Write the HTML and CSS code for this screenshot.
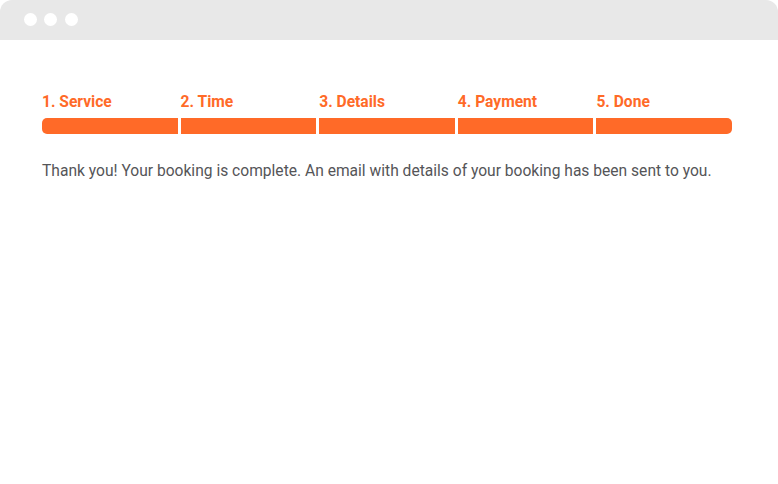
FILE: index.html
```html
<!DOCTYPE html>
<html>
<head>
<meta charset="utf-8">
<link rel="stylesheet" href="styles.css">
</head>
<body>
<div class="window">
  <div class="titlebar">
    <span class="dot"></span><span class="dot"></span><span class="dot"></span>
  </div>
  <div class="content">
    <div class="steps">
      <div class="step"><div class="label">1. Service</div><div class="bar"></div></div>
      <div class="step"><div class="label">2. Time</div><div class="bar"></div></div>
      <div class="step"><div class="label">3. Details</div><div class="bar"></div></div>
      <div class="step"><div class="label">4. Payment</div><div class="bar"></div></div>
      <div class="step"><div class="label">5. Done</div><div class="bar"></div></div>
    </div>
    <p class="message">Thank you! Your booking is complete. An email with details of your booking has been sent to you.</p>
  </div>
</div>
</body>
</html>
```

FILE: styles.css
```css
html, body {
  margin: 0;
  padding: 0;
  background: #ffffff;
}
.window {
  width: 778px;
  height: 484px;
  background: #ffffff;
  border-radius: 12px 12px 0 0;
  overflow: hidden;
}
.titlebar {
  height: 40px;
  background: #e8e8e8;
  display: flex;
  align-items: center;
  gap: 7.5px;
  padding-left: 23.5px;
  box-sizing: border-box;
}
.dot {
  width: 13px;
  height: 13px;
  border-radius: 50%;
  background: #ffffff;
  margin-top: -1px;
}
.content {
  padding: 53px 46px 0 42px;
  font-family: Roboto, "Liberation Sans", sans-serif;
}
.steps {
  display: flex;
  gap: 3px;
}
.step {
  flex: 1;
}
.label {
  color: #ff6a28;
  font-weight: bold;
  font-size: 15.6px;
  line-height: 19px;
  margin-bottom: 6px;
}
.bar {
  height: 16px;
  background: #ff6a28;
}
.step:first-child .bar {
  border-radius: 5px 0 0 5px;
}
.step:last-child .bar {
  border-radius: 0 5px 5px 0;
}
.message {
  margin: 27px 0 0 0;
  color: #555558;
  font-size: 15.6px;
  line-height: 21px;
}
```
